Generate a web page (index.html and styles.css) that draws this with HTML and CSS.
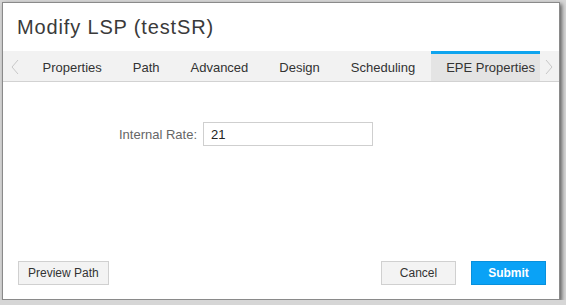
FILE: index.html
```html
<!DOCTYPE html>
<html lang="en">
<head>
    <meta charset="UTF-8">
    <title>Modify LSP</title>
    <link rel="stylesheet" href="styles.css">
</head>
<body>
    <div class="dialog">
        <div class="dialog-header">Modify LSP (testSR)</div>
        <div class="tabs">
            <span class="tab-arrow">
                <svg width="8" height="16" viewBox="0 0 8 16"><path d="M7 1 L1 8 L7 15" fill="none" stroke="#c8c8c8" stroke-width="1"/></svg>
            </span>
            <div class="tab-strip">
                <a class="tab">Properties</a>
                <a class="tab">Path</a>
                <a class="tab">Advanced</a>
                <a class="tab">Design</a>
                <a class="tab">Scheduling</a>
                <a class="tab active">EPE Properties</a>
            </div>
            <span class="tab-arrow right">
                <svg width="8" height="16" viewBox="0 0 8 16"><path d="M1 1 L7 8 L1 15" fill="none" stroke="#c8c8c8" stroke-width="1"/></svg>
            </span>
        </div>
        <div class="dialog-body">
            <div class="form-row">
                <label class="form-label" for="rate">Internal Rate:</label>
                <input class="form-input" id="rate" type="text" value="21">
            </div>
        </div>
        <div class="dialog-footer">
            <button class="btn">Preview Path</button>
            <div class="footer-right">
                <button class="btn">Cancel</button>
                <button class="btn primary">Submit</button>
            </div>
        </div>
    </div>
</body>
</html>
```

FILE: styles.css
```css
body {
    font-family: "Liberation Sans", Arial, sans-serif;
    margin: 0;
    padding: 2px 0 0 2px;
    background: #d6d6d6;
    color: #333;
}
.dialog {
    width: 558px;
    height: 298px;
    box-sizing: border-box;
    background: #fff;
    border: 1px solid #8a8a8a;
    box-shadow: 2px 2px 4px rgba(0,0,0,0.55);
    display: flex;
    flex-direction: column;
}
.dialog-header {
    height: 48px;
    padding-left: 14px;
    display: flex;
    align-items: center;
    font-size: 20px;
    letter-spacing: 0.85px;
    color: #3a3a3a;
}
.tabs {
    display: flex;
    height: 30px;
    background: #f2f2f2;
    border-bottom: 1px solid #d2d2d2;
}
.tab-arrow {
    width: 24px;
    display: flex;
    align-items: center;
    justify-content: center;
    padding-top: 2px;
}
.tab-arrow.right {
    flex: 1;
    padding-right: 2px;
}
.tab-strip {
    display: flex;
}
.tab {
    padding: 0 15.5px;
    font-size: 13px;
    line-height: 27px;
    border-top: 3px solid transparent;
    color: #333;
    white-space: nowrap;
}
.tab.active {
    padding-right: 5px;
    background: #e4e4e4;
    border-top-color: #0ea4ee;
}
.dialog-body {
    flex: 1;
    padding-top: 40px;
}
.form-row {
    display: flex;
    align-items: center;
}
.form-label {
    width: 194px;
    text-align: right;
    padding-right: 6px;
    font-size: 13px;
    color: #666;
}
.form-input {
    width: 170px;
    height: 24px;
    box-sizing: border-box;
    border: 1px solid #cfcfcf;
    padding: 0 7px;
    font-family: inherit;
    font-size: 13px;
    color: #222;
    outline: none;
}
.dialog-footer {
    display: flex;
    justify-content: space-between;
    align-items: center;
    padding: 0 13px 14px 15px;
}
.footer-right {
    display: flex;
    gap: 15px;
}
.btn {
    height: 24px;
    min-width: 75px;
    padding: 0 9px;
    font-family: inherit;
    font-size: 12px;
    color: #333;
    background: #f3f3f3;
    border: 1px solid #d0d0d0;
}
.btn.primary {
    background: #0aa2f6;
    border-color: #0890dc;
    color: #fff;
    font-weight: bold;
}
```
